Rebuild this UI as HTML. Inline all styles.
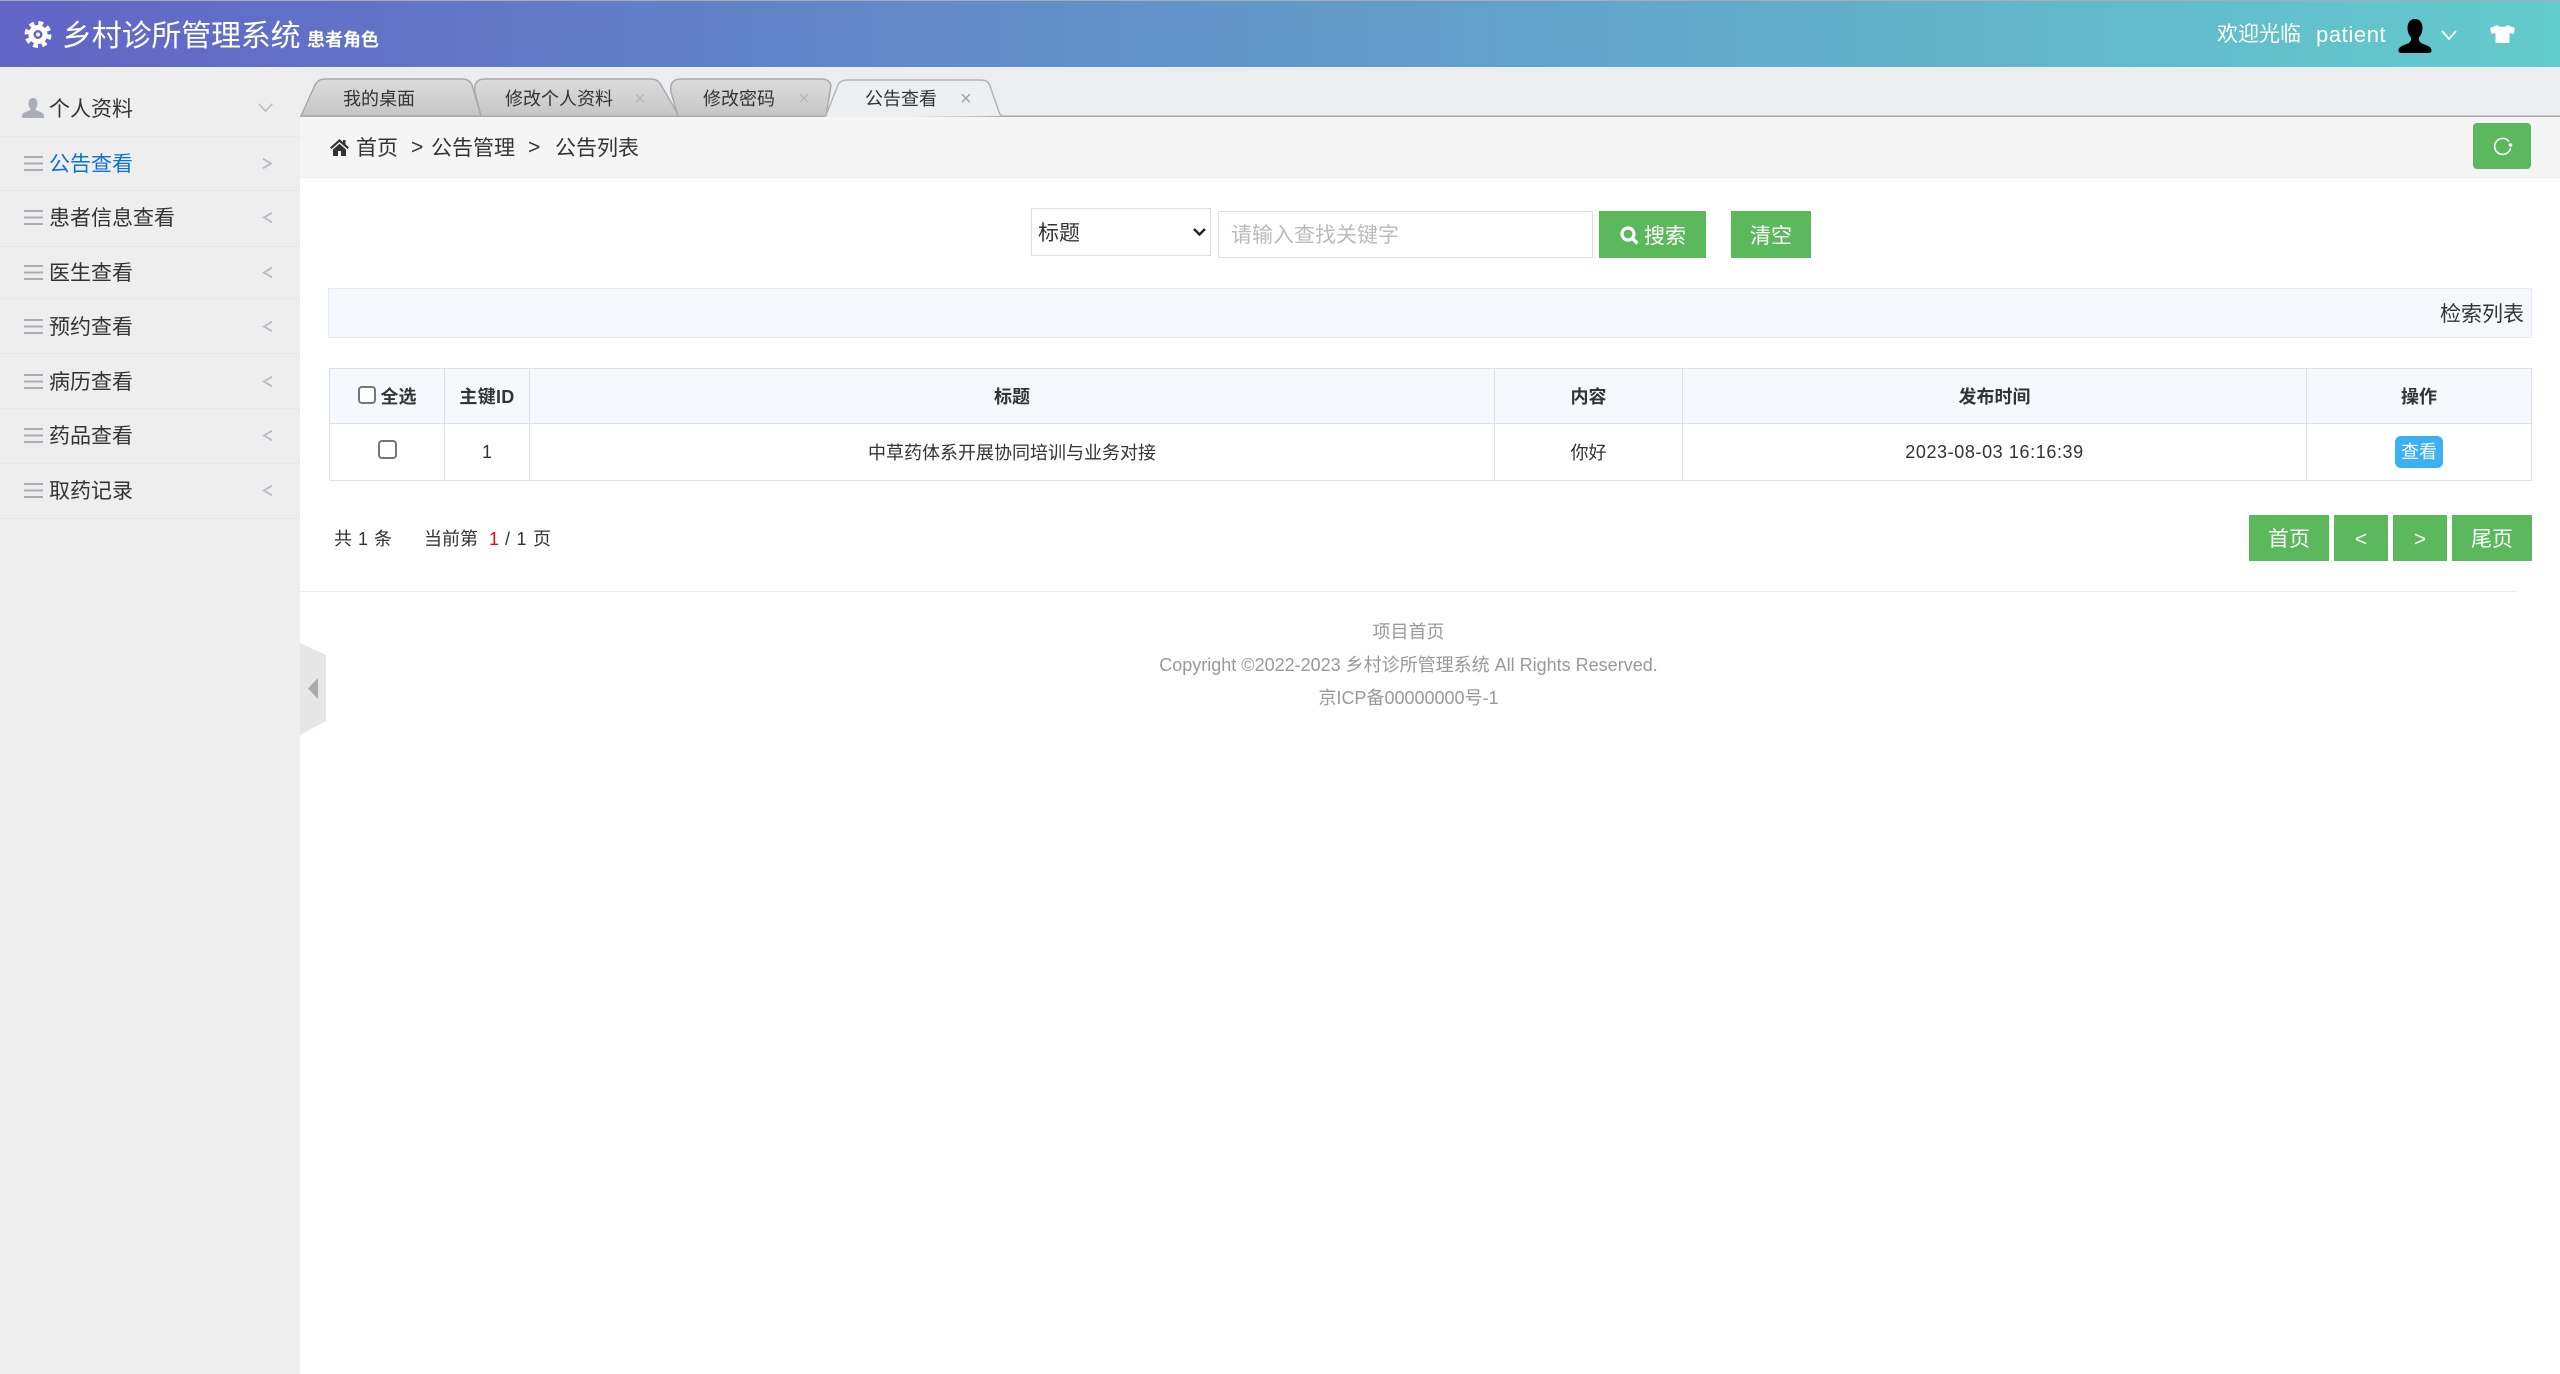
<!DOCTYPE html>
<html lang="zh-CN">
<head>
<meta charset="utf-8">
<title>乡村诊所管理系统</title>
<style>
*{box-sizing:border-box}
html,body{margin:0;padding:0;width:2560px;height:1374px;overflow:hidden;background:#fff}
body{position:relative;font-family:"Liberation Sans","Noto Sans CJK SC",sans-serif;color:#333;font-size:21px}
.t{position:absolute;height:40px;line-height:40px;white-space:nowrap;margin:0}
.a{position:absolute}
svg{display:block;overflow:visible}
#hd{left:0;top:0;width:2560px;height:67px;background:linear-gradient(90deg,#6264c6,#63cccc);border-top:1px solid #aab}
#sb{left:0;top:67px;width:300px;height:1307px;background:#eee}
.ln{position:absolute;left:0;width:300px;height:1px;background:#e7e7e7}
#tabs{left:300px;top:67px;width:2260px;height:50px;background:#ecedee}
#bc{left:300px;top:117px;width:2260px;height:61px;background:#f5f5f5;border-bottom:1px solid #eee}
.g{position:absolute;background:#5cb85c;color:#fff;text-align:center;font-size:21px}
.pt{padding-top:2px}
.tab{font-size:18px}
.x{color:#b5b8bd;font-size:20px}
select{position:absolute;left:1031px;top:208px;width:180px;height:48px;appearance:none;-webkit-appearance:none;border:1px solid #ddd;background:#fff;font:21px "Liberation Sans","Noto Sans CJK SC",sans-serif;color:#333;padding:3px 0 0 6px;border-radius:0}
input.q{position:absolute;left:1218px;top:211px;width:375px;height:47px;border:1px solid #e0e0e0;padding:3px 12px 0;font:21px "Liberation Sans","Noto Sans CJK SC",sans-serif;outline:0;background:#fff}
input.q::placeholder{color:#bbb;opacity:1}
#pn{left:328px;top:288px;width:2204px;height:50px;background:#f5f9fd;border:1px solid #e9edf1}
table{position:absolute;left:329px;top:368px;width:2202px;border-collapse:collapse;table-layout:fixed;font-size:18px;color:#333}
th,td{border:1px solid #dcdfe4;text-align:center;padding:0;font-size:18px}
th{height:55px;background:#f5f9fd;font-weight:700}
td{height:57px}
.cb{display:inline-block;border:2px solid #767676;border-radius:4px;background:#fff;vertical-align:middle}
.vw{display:inline-block;width:48px;height:32px;line-height:32px;background:#3bb0f2;color:#fff;border-radius:6px;font-size:18px}
.f{left:300px;width:2217px;text-align:center;color:#999;font-size:18px}
</style>
</head>
<body>

<div class="a" id="hd"></div>
<svg class="a" style="left:24px;top:21px" width="28" height="27" viewBox="0 0 28 27">
  <circle cx="14" cy="13.5" r="7" fill="none" stroke="#fff" stroke-width="5"/>
  <circle cx="14" cy="13.5" r="11" fill="none" stroke="#fff" stroke-width="5" stroke-dasharray="4.6 4.04"/>
  <circle cx="14" cy="13.5" r="2" fill="#fff"/>
</svg>
<div class="t" style="left:62px;top:17px;font-size:30px;color:#fff;letter-spacing:-.2px">乡村诊所管理系统</div>
<div class="t" style="left:307px;top:20px;font-size:18px;color:#fff;font-weight:700">患者角色</div>
<div class="t" style="left:2217px;top:15px;font-size:21px;color:#fff">欢迎光临</div>
<div class="t" style="left:2316px;top:15px;font-size:22px;color:#fff;letter-spacing:.6px">patient</div>
<svg class="a" style="left:2398px;top:19px" width="34" height="34" viewBox="0 0 34 34">
  <path d="M17 0C12 0 9.500 4 9.500 9C9.500 13 11 16 13 18.500C13.500 20.500 13 22.500 11 24C7 26 1 27 .5 31C.3 33 1.500 34 3 34H31C32.500 34 33.700 33 33.500 31C33 27 27 26 23 24C21 22.500 20.500 20.500 21 18.500C23 16 24.500 13 24.500 9C24.500 4 22 0 17 0Z" fill="#000"/>
</svg>
<svg class="a" style="left:2441px;top:30px" width="16" height="10" viewBox="0 0 16 10"><path d="M1 1L8 9L15 1" fill="none" stroke="#fff" stroke-width="1.800"/></svg>
<svg class="a" style="left:2490px;top:25px" width="25" height="18" viewBox="0 0 25 18">
  <path d="M7.500 0L0 3L1.500 9L5.500 8V18H19.500V8L23.500 9L25 3L17.500 0C16 2.500 9 2.500 7.500 0Z" fill="#fff"/>
</svg>

<div class="a" id="sb"></div>
<div class="ln" style="top:136px"></div>
<div class="ln" style="top:190px"></div>
<div class="ln" style="top:246px"></div>
<div class="ln" style="top:298px"></div>
<div class="ln" style="top:353px"></div>
<div class="ln" style="top:408px"></div>
<div class="ln" style="top:463px"></div>
<div class="ln" style="top:518px"></div>

<svg class="a" style="left:22px;top:98px" width="22" height="20" viewBox="0 0 22 20">
  <path d="M11 0C7.500 0 6.500 3 6.500 6C6.500 8.500 8 10 8.500 11C8.500 13 3 13.500 1 15.500C0 16.500 0 18 0 20H22C22 18 22 16.500 21 15.500C19 13.500 13.500 13 13.500 11C14 10 15.500 8.500 15.500 6C15.500 3 14.500 0 11 0Z" fill="#a9adb5"/>
</svg>
<div class="t" style="left:49px;top:90px">个人资料</div>
<svg class="a" style="left:258px;top:103px" width="15" height="9" viewBox="0 0 15 9"><path d="M.7 .7L7.500 8L14.300 .7" fill="none" stroke="#b9bbbf" stroke-width="1.500"/></svg>

<svg class="a" style="left:24px;top:156px" width="19" height="15" viewBox="0 0 19 15"><path d="M0 1H19M0 7.500H19M0 14H19" stroke="#a9adb5" stroke-width="2"/></svg>
<div class="t" style="left:49px;top:145px;color:#0e70d8">公告查看</div>
<svg class="a" style="left:262px;top:158px" width="10" height="11" viewBox="0 0 10 11"><path d="M1 .7L9 5.500L1 10.300" fill="none" stroke="#b9bbbf" stroke-width="1.800"/></svg>

<svg class="a" style="left:24px;top:210px" width="19" height="15" viewBox="0 0 19 15"><path d="M0 1H19M0 7.500H19M0 14H19" stroke="#a9adb5" stroke-width="2"/></svg>
<div class="t" style="left:49px;top:199px">患者信息查看</div>
<svg class="a" style="left:263px;top:212px" width="10" height="11" viewBox="0 0 10 11"><path d="M9 .7L1 5.500L9 10.300" fill="none" stroke="#b9bbbf" stroke-width="1.800"/></svg>

<svg class="a" style="left:24px;top:265px" width="19" height="15" viewBox="0 0 19 15"><path d="M0 1H19M0 7.500H19M0 14H19" stroke="#a9adb5" stroke-width="2"/></svg>
<div class="t" style="left:49px;top:254px">医生查看</div>
<svg class="a" style="left:263px;top:267px" width="10" height="11" viewBox="0 0 10 11"><path d="M9 .7L1 5.500L9 10.300" fill="none" stroke="#b9bbbf" stroke-width="1.800"/></svg>

<svg class="a" style="left:24px;top:319px" width="19" height="15" viewBox="0 0 19 15"><path d="M0 1H19M0 7.500H19M0 14H19" stroke="#a9adb5" stroke-width="2"/></svg>
<div class="t" style="left:49px;top:308px">预约查看</div>
<svg class="a" style="left:263px;top:321px" width="10" height="11" viewBox="0 0 10 11"><path d="M9 .7L1 5.500L9 10.300" fill="none" stroke="#b9bbbf" stroke-width="1.800"/></svg>

<svg class="a" style="left:24px;top:374px" width="19" height="15" viewBox="0 0 19 15"><path d="M0 1H19M0 7.500H19M0 14H19" stroke="#a9adb5" stroke-width="2"/></svg>
<div class="t" style="left:49px;top:363px">病历查看</div>
<svg class="a" style="left:263px;top:376px" width="10" height="11" viewBox="0 0 10 11"><path d="M9 .7L1 5.500L9 10.300" fill="none" stroke="#b9bbbf" stroke-width="1.800"/></svg>

<svg class="a" style="left:24px;top:428px" width="19" height="15" viewBox="0 0 19 15"><path d="M0 1H19M0 7.500H19M0 14H19" stroke="#a9adb5" stroke-width="2"/></svg>
<div class="t" style="left:49px;top:417px">药品查看</div>
<svg class="a" style="left:263px;top:430px" width="10" height="11" viewBox="0 0 10 11"><path d="M9 .7L1 5.500L9 10.300" fill="none" stroke="#b9bbbf" stroke-width="1.800"/></svg>

<svg class="a" style="left:24px;top:483px" width="19" height="15" viewBox="0 0 19 15"><path d="M0 1H19M0 7.500H19M0 14H19" stroke="#a9adb5" stroke-width="2"/></svg>
<div class="t" style="left:49px;top:472px">取药记录</div>
<svg class="a" style="left:263px;top:485px" width="10" height="11" viewBox="0 0 10 11"><path d="M9 .7L1 5.500L9 10.300" fill="none" stroke="#b9bbbf" stroke-width="1.800"/></svg>

<svg class="a" style="left:300px;top:643px" width="26" height="92" viewBox="0 0 26 92">
  <path d="M0 0L26 12V78L0 92Z" fill="#e6e6e6"/>
  <path d="M18 35L8 45.500L18 56Z" fill="#aaa"/>
</svg>

<div class="a" id="tabs"></div>
<svg class="a" style="left:0;top:67px" width="1100" height="52" viewBox="0 67 1100 52">
  <defs><linearGradient id="tg" x1="0" y1="0" x2="0" y2="1"><stop offset="0" stop-color="#dcdcdc"/><stop offset="1" stop-color="#c6c6c6"/></linearGradient></defs>
  <path d="M301 116L315 85Q318 79 325 79H463Q469 79 472 85L481 116Z" fill="url(#tg)" stroke="#aaa" stroke-width="1.500"/>
  <path d="M481 116L475 92Q473 79 485 79H651Q658 79 661 85L679 116" fill="url(#tg)" stroke="#aaa" stroke-width="1.500"/>
  <path d="M678 116L671 92Q669 79 681 79H821Q829 79 831 85L826 116" fill="url(#tg)" stroke="#aaa" stroke-width="1.500"/>
  <path d="M300 116.500H2560" stroke="#aaa" stroke-width="2"/>
  <path d="M825 118L838 85Q840 80 848 80H981Q988 80 990 86L999 112Q1000 116 1004 116" fill="#eeeff0" stroke="#b4b4b4" stroke-width="1.500"/>
  <path d="M826 117H1000V119H826Z" fill="#f3f3f3"/>
</svg>
<div class="t tab" style="left:343px;top:79px">我的桌面</div>
<div class="t tab" style="left:505px;top:79px">修改个人资料</div>
<div class="t x" style="left:634px;top:79px">×</div>
<div class="t tab" style="left:703px;top:79px">修改密码</div>
<div class="t x" style="left:798px;top:79px">×</div>
<div class="t tab" style="left:865px;top:79px">公告查看</div>
<div class="t x" style="left:960px;top:79px;color:#a0a3a8">×</div>

<div class="a" id="bc"></div>
<svg class="a" style="left:330px;top:139px" width="19" height="17" viewBox="0 0 19 17">
  <path d="M9.500 0L0 8.500L1.500 10L9.500 3L17.500 10L19 8.500L15.500 5.400V1H13V3.200ZM3 10.500V17H8V12H11V17H16V10.500L9.500 4.800Z" fill="#333"/>
</svg>
<div class="t" style="left:356px;top:129px">首页</div>
<div class="t" style="left:411px;top:128px">&gt;</div>
<div class="t" style="left:431px;top:129px">公告管理</div>
<div class="t" style="left:528px;top:128px">&gt;</div>
<div class="t" style="left:555px;top:129px">公告列表</div>
<div class="g" style="left:2473px;top:123px;width:58px;height:46px;border-radius:4px"></div>
<svg class="a" style="left:2493px;top:136px" width="20" height="20" viewBox="0 0 20 20">
  <path d="M16 5.500A8 8 0 1 0 17.500 12" fill="none" stroke="#fff" stroke-width="1.600"/>
  <circle cx="17.500" cy="9" r="1.800" fill="#fff"/>
</svg>

<select aria-label="字段"><option>标题</option></select>
<svg class="a" style="left:1193px;top:228px" width="13" height="8" viewBox="0 0 13 8"><path d="M1 1L6.500 6.500L12 1" fill="none" stroke="#222" stroke-width="2.400"/></svg>
<input class="q" placeholder="请输入查找关键字">
<div class="g" style="left:1599px;top:211px;width:107px;height:47px"></div>
<svg class="a" style="left:1620px;top:226px" width="19" height="19" viewBox="0 0 19 19">
  <circle cx="8" cy="8" r="6" fill="none" stroke="#fff" stroke-width="3.200"/>
  <path d="M12.500 12.500L17.500 17.500" stroke="#fff" stroke-width="3.400"/>
</svg>
<div class="t" style="left:1644px;top:217px;color:#fff">搜索</div>
<div class="g pt" style="left:1731px;top:211px;width:80px;height:47px;line-height:47px">清空</div>

<div class="a" id="pn"></div>
<div class="t" style="left:2440px;top:295px">检索列表</div>

<table>
<colgroup><col style="width:115px"><col style="width:85px"><col style="width:965px"><col style="width:188px"><col style="width:624px"><col style="width:225px"></colgroup>
<tr><th><span class="cb" style="width:18px;height:18px;margin:-6px 5px 0 0"></span>全选</th><th style="letter-spacing:.3px">主键ID</th><th>标题</th><th>内容</th><th>发布时间</th><th>操作</th></tr>
<tr><td><span class="cb" style="width:19px;height:19px;margin-top:-6px"></span></td><td>1</td><td>中草药体系开展协同培训与业务对接</td><td>你好</td><td style="letter-spacing:.6px">2023-08-03 16:16:39</td><td><span class="vw">查看</span></td></tr>
</table>

<div class="t" style="left:334px;top:519px;font-size:18px;word-spacing:1px">共 1 条</div>
<div class="t" style="left:424px;top:519px;font-size:18px">当前第</div>
<div class="t" style="left:489px;top:519px;font-size:18px;color:#f00">1</div>
<div class="t" style="left:505px;top:519px;font-size:18px;word-spacing:1.5px">/ 1 页</div>
<div class="g pt" style="left:2249px;top:515px;width:80px;height:46px;line-height:46px">首页</div>
<div class="g pt" style="left:2334px;top:515px;width:54px;height:46px;line-height:46px">&lt;</div>
<div class="g pt" style="left:2393px;top:515px;width:54px;height:46px;line-height:46px">&gt;</div>
<div class="g pt" style="left:2452px;top:515px;width:80px;height:46px;line-height:46px">尾页</div>

<div class="a" style="left:300px;top:591px;width:2217px;height:1px;background:#eee"></div>
<div class="t f" style="left:300px;top:612px;width:2217px">项目首页</div>
<div class="t f" style="top:645px">Copyright ©2022-2023 乡村诊所管理系统 All Rights Reserved.</div>
<div class="t f" style="top:678px">京ICP备00000000号-1</div>

</body>
</html>
